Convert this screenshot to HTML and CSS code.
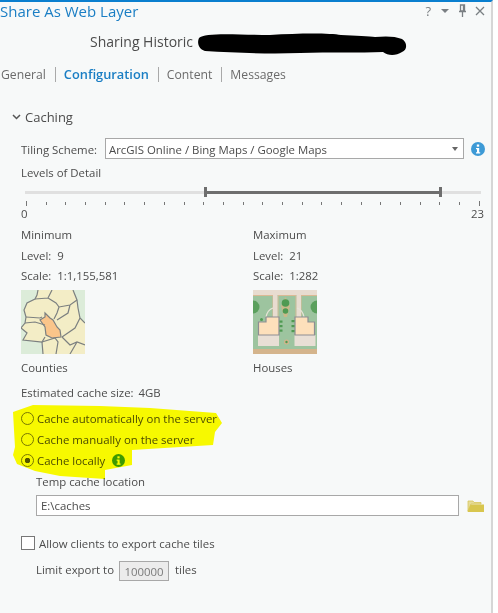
FILE: index.html
```html
<!DOCTYPE html>
<html lang="en">
<head>
  <meta charset="UTF-8" />
  <title>Share As Web Layer</title>
  <link rel="stylesheet" href="styles.css">
</head>
<body>

  <div class="pane">

    <div class="title-bar">
      <span class="title">Share As Web Layer</span>
      <div class="window-buttons">
        <span class="help">?</span>
        <svg width="10" height="6" viewBox="0 0 10 6"><path d="M1 1h8L5 5z" fill="#7a7f83"/></svg>
        <svg width="9" height="13" viewBox="0 0 9 13"><path d="M2.500 1h4v6h-4zM1 7.500h7M4.500 8v5M5.500 1v6" fill="none" stroke="#7a7f83" stroke-width="1.300"/></svg>
        <svg width="10" height="10" viewBox="0 0 10 10"><path d="M1 1l8 8M9 1l-8 8" fill="none" stroke="#7a7f83" stroke-width="1.300"/></svg>
      </div>
    </div>

    <div class="sharing">Sharing Historic</div>

    <div class="tabs">
      <span class="tab tab--first">General</span>
      <span class="tab tab--active">Configuration</span>
      <span class="tab">Content</span>
      <span class="tab">Messages</span>
    </div>

    <div class="section-head">
      <svg width="9" height="6" viewBox="0 0 9 6"><path d="M1 1l3.500 3.500L8 1" fill="none" stroke="#555" stroke-width="1.500"/></svg>
      <span>Caching</span>
    </div>

    <div class="section">

      <div class="tiling">
        <span class="tiling-label">Tiling Scheme:</span>
        <div class="select">
          <span>ArcGIS Online / Bing Maps / Google Maps</span>
          <svg width="6" height="4" viewBox="0 0 6 4"><path d="M0 0h6L3 4z" fill="#666"/></svg>
        </div>
        <svg class="info" width="14" height="14" viewBox="0 0 14 14">
          <circle cx="7" cy="7" r="7" fill="#3d9ad6"/>
          <rect x="5.800" y="2.500" width="2.400" height="2.200" fill="#fff"/>
          <path d="M5 6h3.200v4.200H9.200v1.300H5v-1.300h1v-2.900H5z" fill="#fff"/>
        </svg>
      </div>

      <div class="row lod-label">Levels of Detail</div>

      <div class="slider">
        <div class="track track--left"></div>
        <div class="track--range"></div>
        <div class="track track--right"></div>
      </div>
      <div class="ticks">
        <i class="tick tick--end"></i><i class="tick"></i><i class="tick"></i><i class="tick"></i>
        <i class="tick"></i><i class="tick"></i><i class="tick"></i><i class="tick"></i>
        <i class="tick"></i><i class="tick"></i><i class="tick"></i><i class="tick"></i>
        <i class="tick"></i><i class="tick"></i><i class="tick"></i><i class="tick"></i>
        <i class="tick"></i><i class="tick"></i><i class="tick"></i><i class="tick"></i>
        <i class="tick"></i><i class="tick"></i><i class="tick"></i><i class="tick tick--end"></i>
      </div>
      <div class="tick-labels"><span>0</span><span>23</span></div>

      <div class="levels">
        <div class="level">
          <div class="row">Minimum</div>
          <div class="row row--tight">Level:&nbsp; 9</div>
          <div class="row">Scale:&nbsp; 1:1,155,581</div>
          <svg class="thumb" width="64" height="64" viewBox="0 0 64 64">
            <rect width="64" height="64" fill="#dcecd9"/>
            <path d="M17 0H52L56 10L57 18L59 28L64 33V64H22L21 52L2 50L6 43L0 38L4 33L5 27L3 20L6 13L14 9z" fill="#f3edc6"/>
            <path d="M24 23L29 28L32 30L36 37L39 40L40 47L31 48L25 45L24 37L19 30L24 27z" fill="#fac58a"/>
            <g fill="none" stroke="#7c8080" stroke-width="1.200">
              <path d="M24 23L29 28L32 30L36 37L39 40L40 47L31 48L25 45L24 37L19 30L24 27z"/>
              <path d="M17 0L16 5L14 9L6 13L3 20L5 27L4 33L0 38L6 43L2 50L21 52L24 47"/>
              <path d="M14 9L27 8L31 0M27 8L35 13L38 17L36 23L33 29M38 17L49 15L56 10M49 15L47 23L36 30"/>
              <path d="M52 0L56 10L57 18L59 28L64 33M5 27L19 28L21 27M4 33L14 32L24 35"/>
              <path d="M21 52L34 48L37 52L36 58L35 64M21 52L22 64"/>
              <path d="M41 47L49 55L56 52L64 55M41 47L54 38L59 28M56 52L49 64"/>
            </g>
          </svg>
          <div class="row">Counties</div>
        </div>
        <div class="level">
          <div class="row">Maximum</div>
          <div class="row row--tight">Level:&nbsp; 21</div>
          <div class="row">Scale:&nbsp; 1:282</div>
          <svg class="thumb" width="64" height="64" viewBox="0 0 64 64">
            <rect width="64" height="64" fill="#9dc49f"/>
            <rect width="64" height="5" fill="#e8dcd0"/>
            <path d="M0 5.500H20V27M25 27V5.500H43V27M48 27V5.500H64" fill="none" stroke="#dbb994" stroke-width="1"/>
            <rect x="20" y="5" width="4.500" height="22" fill="#e8dcd0"/>
            <rect x="43.500" y="5" width="4.500" height="22" fill="#e8dcd0"/>
            <path d="M32.500 7L37 16L34 27H31L28 16z" fill="#c9b98a"/>
            <circle cx="32.500" cy="13" r="3.800" fill="#4f9a52"/>
            <circle cx="32.500" cy="21" r="2.800" fill="#4f9a52"/>
            <circle cx="0" cy="17" r="6.500" fill="#5ba05d"/>
            <circle cx="64" cy="17" r="6.500" fill="#5ba05d"/>
            <path d="M13 27C14 22 17 19 20 18M51 27C50 22 47 19 44 18" fill="none" stroke="#e8e4d8" stroke-width="1.200"/>
            <rect x="5" y="45" width="21" height="11" fill="#e8dfd5"/>
            <rect x="41.500" y="45" width="21" height="11" fill="#e8dfd5"/>
            <path d="M5.500 32H13V27H26V45H5.500z" fill="#fde0bb" stroke="#8d8d93" stroke-width="1.200"/>
            <path d="M42 27H55V32H61.500V45H42z" fill="#fde0bb" stroke="#8d8d93" stroke-width="1.200"/>
            <circle cx="8.500" cy="29.500" r="1.500" fill="#4f9a52"/>
            <g fill="#4f9a52">
              <rect x="26.500" y="30.500" width="3" height="2.200"/>
              <rect x="26.500" y="35" width="3" height="2.200"/>
              <rect x="26.500" y="39.500" width="3" height="2.200"/>
              <rect x="38.500" y="30" width="3" height="2.200"/>
              <rect x="38.500" y="35" width="3" height="2.200"/>
              <rect x="38.500" y="40" width="3" height="2.200"/>
            </g>
            <circle cx="33.500" cy="52" r="2.500" fill="#d4b48c"/>
            <circle cx="33.500" cy="52" r="1.200" fill="#4f9a52"/>
            <rect y="59" width="64" height="5" fill="#d4b48c"/>
          </svg>
          <div class="row">Houses</div>
        </div>
      </div>

      <div class="row estimate">Estimated cache size:<span class="estimate-value">4GB</span></div>

      <div class="radios">
        <label class="radio-row"><i class="radio"></i>Cache automatically on the server</label>
        <label class="radio-row"><i class="radio"></i>Cache manually on the server</label>
        <label class="radio-row">
          <i class="radio radio--on"></i>Cache locally
          <svg class="info info--small" width="13" height="13" viewBox="0 0 14 14">
            <circle cx="7" cy="7" r="7" fill="#3d9ad6"/>
            <rect x="5.800" y="2.500" width="2.400" height="2.200" fill="#fff"/>
            <path d="M5 6h3.200v4.200H9.200v1.300H5v-1.300h1v-2.900H5z" fill="#fff"/>
          </svg>
        </label>
      </div>

      <div class="sub">
        <div class="row temp-label">Temp cache location</div>
        <div class="path-row">
          <div class="path-input">E:\caches</div>
          <svg class="folder" width="17" height="13" viewBox="0 0 17 13">
            <path d="M1 12V2h5l1 1.500h7V5H4L1 12z" fill="#e6dc9a" stroke="#d8c75a" stroke-width=".8"/>
            <path d="M0.500 13L3.500 5.500H17V13z" fill="#d8c64e"/>
          </svg>
        </div>
      </div>

      <label class="check-row"><i class="checkbox"></i>Allow clients to export cache tiles</label>

      <div class="limit">
        <span class="limit-text">Limit export to</span>
        <span class="limit-input">100000</span>
        <span class="limit-text">tiles</span>
      </div>

    </div>
  </div>

  <!-- marker and redaction scribbled on top of the screenshot -->
  <svg class="marker" width="498" height="613" viewBox="0 0 498 613">
    <path d="M13 412L33 405L100 406L150 408L216 413L222 423L215 432L213 445L132 450L132 465L105 470L105 479L60 476L35 471L17 464L13 455L15 447L14 430z" fill="#ffff00"/>
  </svg>
  <svg class="redact" width="498" height="613" viewBox="0 0 498 613">
    <path d="M199 38C205 32 240 35 270 35C300 33 330 33 341 35C355 36 370 36 375 37C385 36 395 36 402 39C408 43 407 50 402 52C396 56 388 56 383 52C360 53 330 52 300 53C270 54 235 53 205 51C198 49 197 42 199 38z" fill="#000"/>
  </svg>

</body>
</html>
```

FILE: styles.css
```css
* {
  box-sizing: border-box;
}

html, body {
  height: 100%;
  margin: 0;
  padding: 0;
  background-color: #fff;
  overflow: hidden;
}

body {
  position: relative;
  font-family: 'Open Sans', sans-serif;
  font-size: 11.4px;
  color: #4c4c4c;
}

.pane {
  width: 493px;
  height: 613px;
  background-color: #f7f9f9;
  border-top: 2px solid #0a7fcf;
  border-right: 2px solid #d6d6d6;
}

.title-bar {
  height: 20px;
  padding-bottom: 3px;
  display: flex;
  align-items: center;
  justify-content: space-between;
}

.title {
  font-size: 15px;
  color: #1a7ec4;
}

.window-buttons {
  display: flex;
  align-items: center;
  gap: 8px;
  padding-right: 6px;
}

.help {
  font-size: 13px;
  color: #7a7f83;
  margin-right: 1px;
}

.sharing {
  height: 22px;
  margin-top: 9px;
  padding-left: 90px;
  font-size: 14px;
  line-height: 22px;
}

.tabs {
  display: flex;
  align-items: center;
  height: 22px;
  margin-top: 10px;
  font-size: 12.2px;
  color: #6b6b6b;
}

.tab {
  padding: 0 9px 0 8px;
  border-left: 1px solid #a9a9a9;
  line-height: 15px;
}

.tab--first {
  padding-left: 1px;
  border-left: none;
}

.tab--active {
  font-size: 12.8px;
  font-weight: 600;
  color: #1a7ec4;
}

.section-head {
  display: flex;
  align-items: center;
  gap: 4px;
  height: 20px;
  margin-top: 22px;
  padding-left: 12px;
  font-size: 13px;
}

.section {
  padding-left: 21px;
}

.row {
  height: 20px;
  line-height: 20px;
}

.tiling {
  display: flex;
  align-items: center;
  height: 21px;
  margin-top: 11px;
}

.tiling-label {
  width: 84px;
  padding-top: 1px;
}

.select {
  display: flex;
  align-items: center;
  justify-content: space-between;
  width: 359px;
  height: 21px;
  padding: 1px 5px 0 3px;
  background-color: #fff;
  border: 1px solid #a8a8a8;
}

.info {
  margin-left: 7px;
}

.lod-label {
  margin-top: 4px;
}

.slider {
  display: flex;
  align-items: center;
  width: 456px;
  height: 10px;
  margin: 4px 0 0 4px;
}

.track {
  height: 3px;
  background-color: #e0e0e0;
}

.track--left {
  width: 179px;
}

.track--right {
  flex: 1;
}

.track--range {
  width: 238px;
  height: 10px;
  border-left: 3px solid #6e6e6e;
  border-right: 3px solid #6e6e6e;
  background: linear-gradient(#6e6e6e, #6e6e6e) center / 100% 3px no-repeat;
}

.ticks {
  display: flex;
  justify-content: space-between;
  align-items: center;
  width: 454px;
  height: 5px;
  margin: 4px 0 0 5px;
}

.tick {
  width: 1px;
  height: 3px;
  background-color: #777;
}

.tick--end {
  height: 5px;
}

.tick-labels {
  display: flex;
  justify-content: space-between;
  width: 463px;
  height: 15px;
  line-height: 15px;
}

.levels {
  display: grid;
  grid-template-columns: 232px 1fr;
  margin-top: 4px;
}

.row--tight {
  margin-top: 1px;
}

.thumb {
  display: block;
  margin: 4px 0;
}

.estimate {
  margin-top: 5px;
}

.estimate-value {
  margin-left: 5px;
}

.radios {
  display: flex;
  flex-direction: column;
  gap: 1px;
  margin-top: 5px;
}

.radio-row {
  display: flex;
  align-items: center;
  height: 20px;
}

.radio {
  display: block;
  width: 13px;
  height: 13px;
  margin-right: 3px;
  border: 1px solid #777;
  border-radius: 50%;
}

.radio--on {
  background: radial-gradient(circle, #555 2.5px, transparent 3px);
}

.info--small {
  margin-left: 7px;
}

.sub {
  padding-left: 15px;
}

.temp-label {
  margin-top: 2px;
}

.path-row {
  display: flex;
  align-items: center;
  margin-top: 3px;
}

.path-input {
  width: 423px;
  height: 21px;
  padding-left: 4px;
  line-height: 19px;
  background-color: #fff;
  border: 1px solid #a8a8a8;
}

.folder {
  margin-left: 8px;
}

.check-row {
  display: flex;
  align-items: center;
  height: 20px;
  margin-top: 17px;
}

.checkbox {
  display: block;
  width: 14px;
  height: 14px;
  margin-right: 4px;
  background-color: #fff;
  border: 1px solid #777;
}

.limit {
  display: flex;
  align-items: flex-start;
  gap: 5px;
  height: 20px;
  margin-top: 8px;
  padding-left: 15px;
}

.limit-text {
  line-height: 17px;
}

.limit-input {
  width: 50px;
  height: 20px;
  margin-right: 1px;
  text-align: center;
  line-height: 20px;
  color: #7a7a7a;
  background-color: #ececec;
  border: 1px solid #a8a8a8;
}

.marker {
  position: absolute;
  top: 0;
  left: 0;
  mix-blend-mode: multiply;
  pointer-events: none;
}

.redact {
  position: absolute;
  top: 0;
  left: 0;
  pointer-events: none;
}
```
